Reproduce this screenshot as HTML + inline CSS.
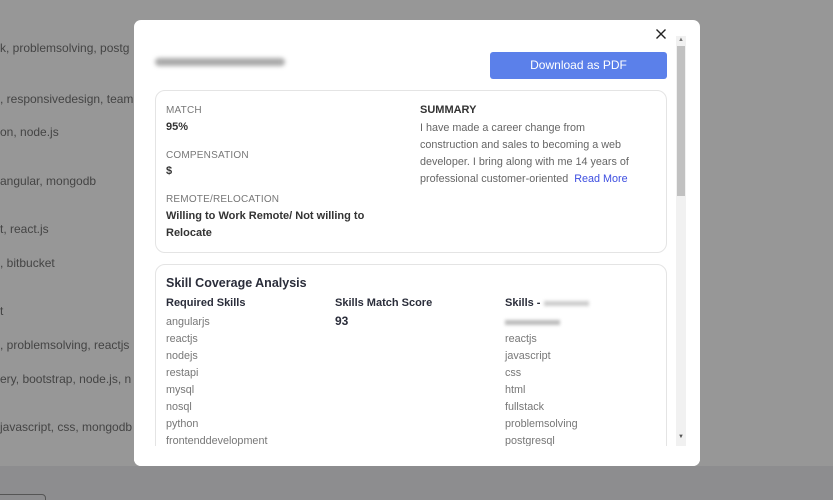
<!DOCTYPE html>
<html style="width:833px;height:500px;overflow:hidden"><head><style>
*{margin:0;padding:0;box-sizing:border-box}
body{width:833px;height:500px;overflow:hidden;background:#979797;font-family:"Liberation Sans",sans-serif;position:relative}
.bg{position:absolute;left:0;font-size:12px;color:#444;white-space:nowrap}
.bot{position:absolute;left:0;top:466px;width:833px;height:34px;background:#8d8d8f}
.modal{position:absolute;left:134px;top:20px;width:566px;height:446px;background:#fff;border-radius:7px;overflow:hidden}
.a{position:absolute;white-space:nowrap}
.lbl{font-size:10px;color:#777;letter-spacing:.2px}
.b{font-size:11px;font-weight:bold;color:#333}
.t{font-size:10.8px;color:#666}
.card{position:absolute;left:21px;width:512px;border:1px solid #e4e4e4;border-radius:10px}
</style></head><body>
<div class="bg" style="top:41px">k, problemsolving, postg</div>
<div class="bg" style="top:92px">, responsivedesign, team</div>
<div class="bg" style="top:125px">on, node.js</div>
<div class="bg" style="top:174px">angular, mongodb</div>
<div class="bg" style="top:222px">t, react.js</div>
<div class="bg" style="top:256px">, bitbucket</div>
<div class="bg" style="top:304px">t</div>
<div class="bg" style="top:338px">, problemsolving, reactjs</div>
<div class="bg" style="top:372px">ery, bootstrap, node.js, n</div>
<div class="bg" style="top:420px">javascript, css, mongodb</div>
<div class="bot"></div>
<div style="position:absolute;left:-4px;top:494px;width:50px;height:12px;border:1px solid #555;border-radius:4px"></div>
<div class="modal">
 <svg class="a" style="left:522px;top:9px" width="10" height="10"><path d="M0.5 0.5L9.5 9.5M9.5 0.5L0.5 9.5" stroke="#222" stroke-width="1.4"/></svg>
 <div class="a" style="left:542px;top:16px;width:10px;height:410px;background:#f1f1f1"></div>
 <div class="a" style="left:543px;top:26px;width:8px;height:150px;background:#c1c1c1"></div>
 <div class="a" style="left:544px;top:17px;font-size:6px;color:#777">▲</div>
 <div class="a" style="left:544px;top:414px;font-size:6px;color:#555">▼</div>
 <div class="a" style="left:21px;top:38px;width:130px;height:8px;background:#aaa;border-radius:4px;filter:blur(2px)"></div>
 <div class="a" style="left:356px;top:32px;width:177px;height:27px;background:#5b80ea;border-radius:3px;color:#fff;font-size:12px;text-align:center;line-height:27px">Download as PDF</div>
 <div class="card" style="top:70px;height:163px"></div>
 <div class="a lbl" style="left:32px;top:85px">MATCH</div>
 <div class="a b" style="left:32px;top:101px">95%</div>
 <div class="a lbl" style="left:32px;top:130px">COMPENSATION</div>
 <div class="a b" style="left:32px;top:145px">$</div>
 <div class="a lbl" style="left:32px;top:174px">REMOTE/RELOCATION</div>
 <div class="a b" style="left:32px;top:190px">Willing to Work Remote/ Not willing to</div>
 <div class="a b" style="left:32px;top:207px">Relocate</div>
 <div class="a b" style="left:286px;top:84px">SUMMARY</div>
 <div class="a t" style="left:286px;top:100px;line-height:17px">I have made a career change from<br>construction and sales to becoming a web<br>developer. I bring along with me 14 years of<br>professional customer-oriented &nbsp;<span style="color:#3d4ee0">Read More</span></div>
 <div class="card" style="top:244px;height:220px"></div>
 <div class="a" style="left:32px;top:256px;font-size:12.5px;font-weight:bold;color:#2a2d3a">Skill Coverage Analysis</div>
 <div class="a b" style="left:32px;top:277px;color:#2a2d3a">Required Skills</div>
 <div class="a b" style="left:201px;top:277px;color:#2a2d3a">Skills Match Score</div>
 <div class="a b" style="left:371px;top:277px;color:#2a2d3a">Skills - <span style="display:inline-block;width:45px;height:5px;background:#ccc;filter:blur(1.5px)"></span></div>
 <div class="a" style="left:201px;top:294px;font-size:12px;font-weight:bold;color:#2a2d3a">93</div>
 <div class="a t" style="left:32px;top:294px;line-height:17px;color:#777">angularjs<br>reactjs<br>nodejs<br>restapi<br>mysql<br>nosql<br>python<br>frontenddevelopment</div>
 <div class="a" style="left:371px;top:300px;width:55px;height:5px;background:#bbb;filter:blur(1.5px)"></div>
 <div class="a t" style="left:371px;top:311px;line-height:17px;color:#777">reactjs<br>javascript<br>css<br>html<br>fullstack<br>problemsolving<br>postgresql</div>
 <div class="a" style="left:0;top:426px;width:566px;height:20px;background:#fff"></div>
</div>
</body></html>
